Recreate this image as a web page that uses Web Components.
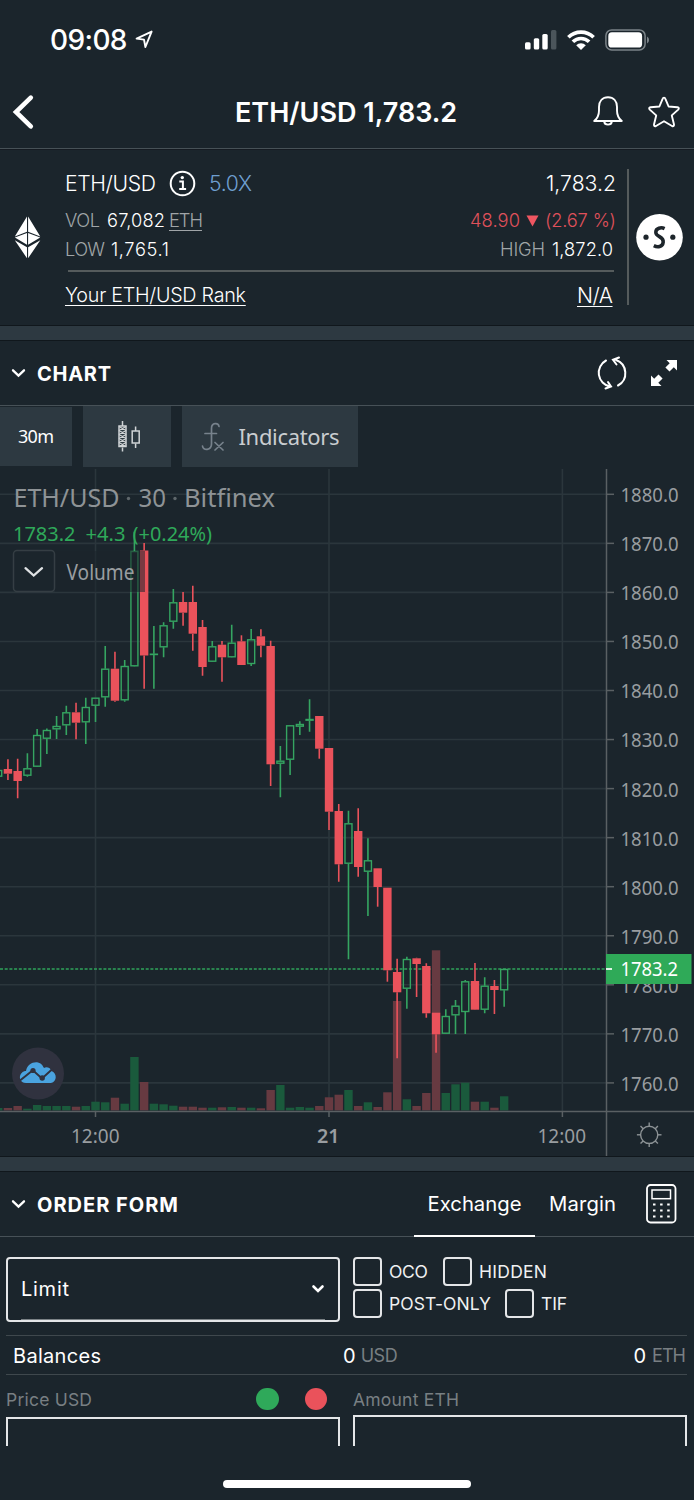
<!DOCTYPE html>
<html lang="en">
<head>
<meta charset="utf-8">
<title>ETH/USD</title>
<style>
html,body{margin:0;background:#1b252c}
body{width:694px;height:1500px;overflow:hidden;font-family:Inter,"Liberation Sans",sans-serif;color:#fff}
</style>
</head>
<body>
<trade-app></trade-app>
<script>
const define = (name, html, after) => {
  const t = document.createElement('template');
  t.innerHTML = html;
  customElements.define(name, class extends HTMLElement {
    connectedCallback() {
      if (this.shadowRoot) return;
      this.attachShadow({mode: 'open'}).appendChild(t.content.cloneNode(true));
      if (after) after(this, this.shadowRoot);
    }
  });
};

// Single-line label; "fit" spreads its letters over a given width in pixels.
define('ui-label', `<style>:host{display:inline-block;white-space:nowrap;line-height:1.2;flex:none}span{display:inline-block;text-decoration:inherit}</style><span><slot></slot></span>`,
  (el, root) => {
    const fit = parseFloat(el.getAttribute('fit'));
    if (!fit) return;
    const n = el.textContent.length;
    const w = root.querySelector('span').getBoundingClientRect().width;
    const ls = n > 1 ? (fit - w) / (n - 1) : 0;
    el.style.letterSpacing = ls + 'px';
    el.style.width = fit + 'px';
  });

define('status-bar', `<style>
:host{display:flex;height:80px;box-sizing:border-box;padding:0 44px 0 50px;align-items:center}
ui-label{font-size:28px;font-weight:500;padding-top:1px}.sp{flex:1}svg{display:block}
.loc{margin-left:7px}.sig{margin-right:10px}.wifi{margin-right:10px}</style>
<ui-label fit="77.5">09:08</ui-label>
<svg class="loc" width="20" height="20" viewBox="0 0 20 20"><path d="M1.6 8.6 16.6 1.600 10.400 17 9 9.600Z" fill="none" stroke="#fff" stroke-width="1.9" stroke-linejoin="round"/></svg>
<div class="sp"></div>
<svg class="sig" width="32" height="20" viewBox="0 0 32 20"><g fill="#fff"><rect x="0" y="12.2" width="5.6" height="7.2" rx="1.5"/><rect x="8.8" y="8.3" width="5.4" height="11.1" rx="1.5"/><rect x="17.3" y="4" width="5.4" height="15.4" rx="1.5"/></g><rect x="26" y="0" width="5.4" height="19.4" rx="1.5" fill="#4b555b"/></svg>
<svg class="wifi" width="28" height="20" viewBox="0 0 28 20"><g fill="none" stroke="#fff" stroke-width="3.7"><path d="M1.4 7.2A18 18 0 0 1 26.6 7.2"/><path d="M5.9 11.8A11.6 11.6 0 0 1 22.1 11.8"/></g><path d="M9.2 15.3A6.8 6.8 0 0 1 18.8 15.3L14 20Z" fill="#fff"/></svg>
<svg width="45" height="22" viewBox="0 0 45 22"><rect x=".9" y=".9" width="39.2" height="20" rx="5.8" fill="none" stroke="#7b8388" stroke-width="1.5"/><rect x="3.3" y="3.3" width="33.8" height="15.2" rx="3.6" fill="#fff"/><path d="M42 7.5a4 4 0 0 1 0 7Z" fill="#7b8388"/></svg>`);

define('pair-header', `<style>
:host{display:grid;grid-template-columns:120px 1fr 120px;height:69px;box-sizing:border-box;align-items:center;border-bottom:1.5px solid #475157;padding-bottom:5px}
ui-label{font-size:27px;font-weight:600;justify-self:center;padding-top:4px}svg{display:block}
.back{margin-left:12px}.r{display:flex;justify-content:flex-end;gap:24px;padding-right:13px;align-items:center}</style>
<svg class="back" width="24" height="36" viewBox="0 0 24 36"><path d="M18.8 3.7 4 18 18.8 32.3" fill="none" stroke="#fff" stroke-width="4.6" stroke-linecap="round" stroke-linejoin="miter"/></svg>
<ui-label fit="224"><slot></slot></ui-label>
<div class="r">
<svg width="30" height="32" viewBox="0 0 30 32" fill="none" stroke="#fff" stroke-width="1.9" stroke-linejoin="round"><path d="M1.2 25C4.6 22.400 6 19.500 6 14.500V11C6 5 9.5 1.200 15 1.200S24 5 24 11V14.500C24 19.500 25.4 22.400 28.8 25Z"/><path d="M11.2 25.600c.4 4 7.2 4 7.6 0"/></svg>
<svg width="34" height="34" viewBox="0 0 34 34" fill="none" stroke="#fff" stroke-width="1.9" stroke-linejoin="round"><path d="M17 2.6Q18 2.6 18.4 3.8L21.6 11.5 30.4 12.2Q32.8 12.8 31.2 14.6L24.8 20.4 27 29.4Q27.2 31.8 25 31L17 26.2 9 31Q6.8 31.8 7 29.4L9.2 20.4 2.8 14.6Q1.2 12.8 3.6 12.2L12.4 11.5 15.6 3.8Q16 2.6 17 2.6Z"/></svg>
</div>`);

define('section-gap', `<style>:host{display:block;height:16px;box-sizing:border-box;background:#2d3941;border-top:1.5px solid #10171c;border-bottom:1.5px solid #10171c}</style>`);

define('ticker-card', `<style>
:host{display:grid;grid-template-columns:65px 551px 11px 1px 1fr;height:176px;box-sizing:border-box;border-top:1px solid #151b22;font-size:18.3px;font-weight:350}
svg{display:block}.eth{margin:66px 0 0 14px}
.body{padding-top:18px}.row{display:flex;align-items:center}.sp{flex:1}
.a{height:32px;font-size:21.2px}.b{height:40px;padding-top:1px;box-sizing:border-box}.c{height:20px;padding-right:3px}.d{height:50px;padding-right:3px;font-size:19.700px;box-sizing:border-box;padding-bottom:2px}
.g{color:#a0a5a8}.hr{height:1.5px;margin:10px 2px 0 3px;background:#555b5c}
.v{width:1.5px;height:136px;background:#555b5c;margin-top:19px}
.u{text-decoration:underline;text-underline-offset:3px;text-decoration-thickness:1px}
.blue{color:#6f9fd0}.red{color:#e0515b}.s{margin:64px 0 0 8px}
</style>
<svg class="eth" width="27" height="43" viewBox="0 0 27 43"><path fill="#fff" d="M13 .5 .8 20.5 13 15.8ZM14.1.5V15.8L26.3 20.5ZM13 17 .9 21.6 13 28.8ZM14.1 17V28.8L26.2 21.6ZM13 31.3.8 24.2 13 42.3ZM14.1 31.3V42.3L26.3 24.2Z"/></svg>
<div class="body">
<div class="row a"><ui-label fit="91">ETH/USD</ui-label>
<svg style="margin:-2px 0 0 13px" width="27" height="27" viewBox="0 0 27 27"><circle cx="13.5" cy="13.5" r="11.8" fill="none" stroke="#fff" stroke-width="2"/><circle cx="13.3" cy="7.6" r="1.7" fill="#fff"/><path d="M10.3 11.4h3.6v7.4M10.2 19h6.9" fill="none" stroke="#fff" stroke-width="2"/></svg>
<ui-label class="blue" style="margin-left:13px" fit="43">5.0X</ui-label><div class="sp"></div><ui-label fit="70">1,783.2</ui-label></div>
<div class="row b"><ui-label class="g" fit="35">VOL</ui-label><ui-label style="margin-left:7px" fit="58">67,082</ui-label><ui-label class="g u" style="margin-left:4px" fit="34">ETH</ui-label><div class="sp"></div>
<ui-label class="red" fit="50">48.90</ui-label><svg style="margin:0 6px" width="13" height="12" viewBox="0 0 13 12"><path d="M.5.5h12L6.5 11.5Z" fill="#ef5661"/></svg><ui-label class="red" fit="71">(2.67 %)</ui-label></div>
<div class="row c"><ui-label class="g" fit="40">LOW</ui-label><ui-label style="margin-left:6px" fit="58">1,765.1</ui-label><div class="sp"></div><ui-label class="g" fit="45">HIGH</ui-label><ui-label style="margin-left:7px" fit="61">1,872.0</ui-label></div>
<div class="hr"></div>
<div class="row d"><ui-label class="u" fit="181">Your ETH/USD Rank</ui-label><div class="sp"></div><ui-label class="u" style="font-size:21px" fit="36">N/A</ui-label></div>
</div>
<div></div><div class="v"></div>
<svg class="s" width="47" height="47" viewBox="0 0 47 47"><circle cx="23.5" cy="23.3" r="23.3" fill="#fff"/><circle cx="10" cy="23.2" r="2.6" fill="#1d252b"/><circle cx="36.8" cy="23.2" r="2.6" fill="#1d252b"/><path d="M28.6 14.6C25.2 13 19.8 14 19.8 18.2 19.8 23.2 28 22.2 27.2 28.2 26.6 33.2 21.4 33.4 17.8 31.6" fill="none" stroke="#1d252b" stroke-width="3.5"/></svg>`);

define('panel-header', `<style>
:host{display:flex;height:65px;box-sizing:border-box;align-items:center;border-bottom:1.5px solid #475157;padding-left:11px}
svg{display:block;flex:none}ui-label{font-size:20px;font-weight:650;margin-left:11px;padding-top:1px}.sp{flex:1}slot[name=actions]{display:contents}</style>
<svg width="15" height="10" viewBox="0 0 15 10"><path d="M2 2.3 7.5 7.6 13 2.3" fill="none" stroke="#fff" stroke-width="2.3" stroke-linecap="round"/></svg>
<ui-label><slot name="title"></slot></ui-label><div class="sp"></div><slot name="actions"></slot>`);

define('chart-toolbar', `<style>
:host{display:flex;height:63px;align-items:flex-start;font-family:"Noto Sans",sans-serif;gap:11px}
.b{background:#2d3941;height:61px;display:flex;align-items:center;justify-content:center}
.t{height:59px;width:72px;margin-top:1px;font-size:18px}.k{width:88px}.i{width:176px;font-size:22px;color:#c9cdd0}svg{display:block}</style>
<div class="b t"><ui-label fit="36">30m</ui-label></div>
<div class="b k"><svg style="margin-left:3px" width="24" height="34" viewBox="0 0 24 34" fill="none" stroke="#d0d4d6" stroke-width="1.5"><path d="M5.5 1v5M5.5 27.500v4M18.600 6.500v4.500M18.600 23.500v4.500"/><rect x="2" y="6" width="7" height="20.500" fill="#2d3941"/><rect x="15.200" y="11" width="7" height="12"/><path d="M2 6.500l7 4M9 6.500l-7 4M2 10.500l7 4M9 10.500l-7 4M2 14.500l7 4M9 14.500l-7 4M2 18.500l7 4M9 18.500l-7 4M2 22.500l7 4M9 22.500l-7 4" stroke-width="1.200"/></svg></div>
<div class="b i"><svg width="24" height="30" viewBox="0 0 24 30" fill="none" stroke="#77828c" stroke-width="1.700" stroke-linecap="round"><path d="M18 4.500C17.500.6 10.500.2 10.500 6.500V22C10.500 28.500 2 29 1.500 24M4 11.500h11.500M14 20.500l8 7.500M22 20.500l-8 7.500"/></svg><ui-label style="margin-left:14px" fit="101">Indicators</ui-label></div>`);

// Each candle: [up, wick top, body top, body bottom, wick bottom, volume top].
const CANDLES = [
[1,770,770,776.7,776.7,1108],[0,759.3,769,773.7,780,1108],[0,758.7,771,781,798.3,1106],[1,753.3,768.3,775.7,776.7,1108.7],
[1,729,735,766.7,767,1105],[1,728.5,730,738.7,754,1106],[1,716,726,729.3,739,1106],[1,705.7,712.3,725.3,735,1106],
[0,702.7,712.3,722.7,739.3,1106.7],[1,697.7,707,722.3,744,1106],[1,697.7,697.7,705.7,722,1101.7],[1,646,668.7,697.3,706.7,1102.3],
[0,651.7,668.7,700.7,701.7,1097.7],[1,660,666,700.3,701.7,1103.7],[1,531.7,551,666.3,666.5,1057],[0,543,550.5,655.5,688.7,1082],
[1,626,653.7,654.5,688.7,1103.7],[1,622.3,625.3,647.3,657.3,1104.3],[1,589,602.3,621.7,628.7,1105.7],[0,592,602,612.7,625.7,1106.7],
[0,585.7,602,633.7,650.7,1106.7],[0,620,627,667,675.7,1107.7],[1,641,646.3,661.7,662,1107.7],[0,641,644.7,657.3,681.7,1107.3],
[1,624.7,642.7,657.3,657.5,1107],[0,635.3,641.3,665,665,1107.7],[1,629,639.3,664,666,1107.7],[0,629.3,636.3,645.7,657.3,1108.3],
[0,640.7,646,764.3,786,1090],[1,746,760.7,763.7,797.3,1085],[1,725,725.3,759.7,775,1107.7],[1,721.3,724,726.7,735,1107],
[1,699.3,719,720.7,731.7,1107.7],[0,716,716,748.7,758.7,1106],[0,748,748,811.7,830,1097.3],[0,804,811,864.3,881.7,1094.7],
[1,810.7,823.3,863.7,959.3,1090],[0,808.3,831,867,876.7,1106],[1,838.3,860.3,871.7,916,1102.3],[0,868.3,868.3,887,906.7,1107],
[0,887.7,887.7,970.3,981.7,1092.3],[0,958.7,972,992.3,1058.3,1001],[1,956.7,959,988.7,1008.7,1099.3],[0,957.7,958.3,964,997,1106],
[0,963.3,966,1013.3,1017.7,1093],[0,1012.7,1012.7,1034.3,1052.7,950.3],[1,1009.3,1016,1033.7,1034,1093],[1,1000,1005.7,1015.3,1034,1084.3],
[1,980,981.3,1012,1034,1082.7],[0,963,981,1009.7,1010,1101.7],[1,977.3,985.7,1009.7,1013.3,1101.7],[0,980,986,990,1014,1107.7],
[1,969,969,990.3,1006.7,1096.3]];

define('price-chart', `<style>:host{display:block;height:687px}svg{display:block}text{font-family:"Noto Sans",sans-serif}</style>
<svg width="694" height="687" viewBox="0 469 694 687"><g id="plot"></g></svg>`,
  (el, root) => {
    const X = i => 95.5 + (i - 10) * 9.73;
    const txt = (x, y, w, size, fill, s, extra = '') => `<text x="${x}" y="${y}" font-size="${size}" fill="${fill}" textLength="${w}" lengthAdjust="spacingAndGlyphs" ${extra}>${s}</text>`;
    let h = '<g stroke="#2b363c" stroke-width="1.6">';
    for (let k = 0; k < 13; k++) { const y = 494.3 + k * 49.05; h += `<path d="M0 ${y}H606"/>`; }
    [95.5, 329, 562.4].forEach(x => h += `<path d="M${x} 469V1111"/>`);
    h += '</g><path d="M0 969H606" stroke="#2fa35a" stroke-width="1.5" stroke-dasharray="3 1.7"/>';
    CANDLES.forEach((c, i) => {
      h += `<rect x="${X(i) - 4.2}" y="${c[5]}" width="8.4" height="${1110.4 - c[5]}" fill="${c[0] ? '#1a5a3c' : '#673a41'}"/>`;
    });
    CANDLES.forEach(([up, wt, bt, bb, wb], i) => {
      const x = X(i), col = up ? '#35a561' : '#ea525b';
      h += `<path d="M${x} ${wt}V${bt}M${x} ${bb}V${wb}" stroke="${col}" stroke-width="1.6"/>`;
      h += up ? `<rect x="${x - 3.5}" y="${bt + .5}" width="7" height="${Math.max(.3, bb - bt - 1)}" fill="none" stroke="${col}" stroke-width="1.4"/>`
              : `<rect x="${x - 4.2}" y="${bt}" width="8.4" height="${bb - bt}" fill="${col}"/>`;
    });
    // legend
    h += '<rect x="55" y="551" width="90" height="41" fill="#1b252c" opacity=".55"/>';
    h += txt(13.5, 506.5, 106, 26, '#8e9396', 'ETH/USD') + txt(138.5, 506.5, 27.500, 26, '#8e9396', '30') + txt(184, 506.5, 91, 26, '#8e9396', 'Bitfinex');
    h += '<circle cx="128.500" cy="498.500" r="1.700" fill="#5f676b"/><circle cx="175" cy="498.500" r="1.700" fill="#5f676b"/>';
    h += txt(13, 540.5, 62.5, 20.7, '#2fa95a', '1783.2') + txt(85.5, 540.5, 40, 20.7, '#2fa95a', '+4.3') + txt(132.5, 540.5, 79.500, 20.7, '#2fa95a', '(+0.24%)');
    h += '<rect x="13.500" y="550.500" width="41" height="41" rx="3.500" fill="#1b252c" stroke="#353e44" stroke-width="1.500"/><path d="M25.500 568.200 33.700 575.500 42 568.200" fill="none" stroke="#dfe2e4" stroke-width="2.300" stroke-linecap="round"/>';
    h += txt(66.5, 579.7, 68, 21.3, '#999da0', 'Volume');
    // axes
    h += '<g stroke="#5a6063" stroke-width="1.500"><path d="M606.500 469V1156M0 1111.500H694"/>';
    for (let k = 0; k < 13; k++) h += `<path d="M606 ${494.3 + k * 49.05}h8"/>`;
    [95.5, 329, 562.4].forEach(x => h += `<path d="M${x} 1111v6"/>`);
    h += '</g>';
    for (let k = 0; k < 13; k++) h += txt(620.5, 502.2 + k * 49.05, 58, 19.7, '#999da0', (1880 - 10 * k) + '.0');
    h += '<rect x="606" y="954" width="85.500" height="30" fill="#2faa58"/><path d="M606 969h6" stroke="#fff" stroke-width="1.700"/>' + txt(620.5, 976, 57.5, 19.7, '#fff', '1783.2');
    h += txt(71, 1143.3, 48.5, 19.5, '#999da0', '12:00') + txt(317, 1143.3, 22.500, 19.5, '#999da0', '21', 'font-weight="600"') + txt(537.5, 1143.3, 48.5, 19.5, '#999da0', '12:00');
    // settings
    h += '<g fill="none" stroke="#8d9396" stroke-width="1.400"><circle cx="649.200" cy="1134.800" r="8.600"/>';
    for (let a = 0; a < 8; a++) h += `<path transform="rotate(${a * 45} 649.2 1134.8)" d="M649.2 1126.200v-3.700"/>`;
    h += '</g>';
    // provider badge
    h += '<circle cx="38" cy="1073.500" r="26" fill="#30323f"/><path d="M24 1082.800C17 1080 20 1071 26 1071 27 1064.500 33 1061.500 38 1062.500 42 1063.500 43 1066.500 44 1068 46 1066.800 50 1067 51.500 1071 57 1073 57.500 1081.500 51 1083H26Z" fill="#4aa3df"/><path d="M20 1080.500 32.800 1070.300 42 1078.500 53 1068.500" fill="none" stroke="#30323f" stroke-width="2"/><circle cx="33" cy="1070.500" r="2.600" fill="#30323f"/><circle cx="42.200" cy="1078" r="2.700" fill="#30323f"/>';
    root.getElementById('plot').innerHTML = h;
  });

define('order-tabs', `<style>:host{display:flex;height:65px;align-items:center;font-size:20.300px;margin-right:17px}
.t{height:65px;display:flex;align-items:center;box-sizing:border-box;justify-content:center}.on{width:121px;border-bottom:2px solid #fff;padding-top:2px}.m{padding:0 30px 0 14px}svg{display:block}</style>
<div class="t on"><ui-label fit="94">Exchange</ui-label></div><div class="t m"><ui-label fit="67">Margin</ui-label></div>
<svg width="31" height="40" viewBox="0 0 31 40" fill="none" stroke="#fff"><rect x="1" y="1" width="28.500" height="37.500" rx="3.500" stroke-width="1.800"/><rect x="6" y="6" width="18.500" height="8.700" stroke-width="1.500"/><path d="M7 20.500h18M7 26.500h18M7 32.500h18" stroke-width="1.900" stroke-dasharray="2.500 4.600"/></svg>`);

define('check-box', `<style>:host{display:flex;align-items:center;font-size:17.500px;color:#f0f1f2}i{display:block;box-sizing:border-box;width:29px;height:29px;border:2px solid #e4e6e8;border-radius:4px;margin-right:7px}</style><i></i><slot></slot>`);

define('order-form', `<style>
:host{display:block;height:209px;overflow:hidden;padding:0 7px 0 6px;font-size:20px}
.grid{display:grid;grid-template-columns:334px 334px;column-gap:13px}
.sel{margin-top:20px;height:65px;box-sizing:border-box;border:2px solid #e4e6e8;border-radius:4px;display:grid;padding:0 13px}
.in{display:flex;align-items:center;justify-content:space-between;border-bottom:1.500px solid #7b8286}
.checks{padding-top:20px}.r{display:flex;height:32px;align-items:flex-start}
.bal{display:flex;align-items:center;height:40px;box-sizing:border-box;border-top:1.500px solid #3f484d;border-bottom:1.500px solid #3f484d;margin-top:13px;padding:2px 1px 0 7px}
.g{color:#787f83;font-size:18px}
.lab{display:flex;align-items:center;height:36px;padding-top:6px;font-size:17.500px;color:#787f83}
.dot{width:22.500px;height:22.500px;border-radius:50%;background:#2fa95a}.dot.x{background:#ea525b;margin:0 13px 0 26px}
.f{height:40px;border:2px solid #e4e6e8;border-bottom:0}svg{display:block}
</style>
<div class="grid"><div class="sel"><div class="in"><ui-label fit="48">Limit</ui-label><svg width="14" height="10" viewBox="0 0 14 10"><path d="M2.500 2.500 7 7 11.500 2.500" fill="none" stroke="#fff" stroke-width="2.600" stroke-linecap="round"/></svg></div></div>
<div class="checks"><div class="r"><check-box><ui-label fit="39">OCO</ui-label></check-box><check-box style="margin-left:15px"><ui-label fit="68">HIDDEN</ui-label></check-box></div>
<div class="r"><check-box><ui-label fit="102">POST-ONLY</ui-label></check-box><check-box style="margin-left:14px"><ui-label fit="26">TIF</ui-label></check-box></div></div></div>
<div class="bal"><ui-label fit="88">Balances</ui-label><ui-label style="margin-left:242px">0</ui-label><ui-label class="g" style="margin-left:5px" fit="37">USD</ui-label><div style="flex:1"></div><ui-label>0</ui-label><ui-label class="g" style="margin-left:6px" fit="34">ETH</ui-label></div>
<div class="grid"><div><div class="lab"><ui-label fit="86">Price USD</ui-label><div style="flex:1"></div><div class="dot"></div><div class="dot x"></div></div><div class="f"></div></div>
<div><div class="lab" style="height:32px;padding-top:8px"><ui-label fit="106">Amount ETH</ui-label></div><div class="f"></div></div></div>`);

define('home-indicator', `<style>:host{display:flex;height:54px;justify-content:center;align-items:flex-end}div{width:248px;height:8px;border-radius:4px;background:#fff;margin:0 0 12px}</style><div></div>`);

define('trade-app', `<style>:host{display:flex;flex-direction:column;width:694px;height:1500px}status-bar,pair-header,ticker-card,section-gap,panel-header,chart-toolbar,price-chart,order-form,home-indicator{flex:none}.ic{display:flex;gap:22px;margin-right:16px;align-items:center}svg{display:block}</style>
<status-bar></status-bar>
<pair-header>ETH/USD 1,783.2</pair-header>
<ticker-card></ticker-card>
<section-gap></section-gap>
<panel-header><ui-label slot="title" fit="74">CHART</ui-label>
<div slot="actions" class="ic"><svg width="32" height="34" viewBox="0 0 32 34" fill="none" stroke="#fff" stroke-width="2" stroke-linecap="round"><path d="M10 4.500A14 14 0 0 0 14 30.500M9.500 32.500 15 30.500 12 26M20 4A14 14 0 0 1 22 29.500M23 1.500 17 3.800 20.500 8.500"/></svg>
<svg width="28" height="28" viewBox="0 0 28 28" fill="#fff"><path d="M16.500 1H27V11.500L23.800 8.300 19.500 12.600 15.400 8.500 19.700 4.200ZM1 16.500 4.200 19.700 8.500 15.400 12.600 19.500 8.300 23.800 11.500 27H1Z"/></svg></div></panel-header>
<chart-toolbar></chart-toolbar>
<price-chart></price-chart>
<section-gap></section-gap>
<panel-header><ui-label slot="title" fit="141">ORDER FORM</ui-label><order-tabs slot="actions"></order-tabs></panel-header>
<order-form></order-form>
<home-indicator></home-indicator>`);
</script>
</body>
</html>
